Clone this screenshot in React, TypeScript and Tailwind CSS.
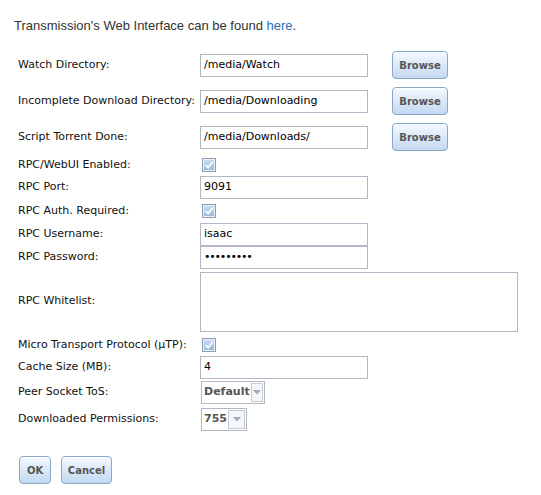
import React from "react";

const label = "text-[11px] text-[#111] w-[182px] shrink-0";
const field =
  "h-[23px] w-[168px] border border-[#b3b9c4] bg-white px-[3px] text-[11px] text-black flex items-center";
const btn =
  "h-[28px] rounded-[4px] border border-[#8aa7c9] bg-[linear-gradient(to_bottom,#f3f8fe,#c4d9f1)] text-[10px] font-bold text-[#555] shadow-[inset_0_1px_0_#fff]";

function Browse() {
  return <button className={`ml-[24px] w-[56px] ${btn}`}>Browse</button>;
}

function Check() {
  return (
    <span className="ml-[2px] inline-flex h-[14px] w-[14px] items-center justify-center border border-[#8e9db2] bg-[#a9c3e4] bg-[linear-gradient(to_bottom,#cfdff3,#94b4dd)] shadow-[inset_0_0_0_1px_#e8f0fa]">
      <svg width="10" height="10" viewBox="0 0 10 10">
        <path d="M1.5 5.2 L4 7.6 L8.8 2" fill="none" stroke="#fff" strokeWidth="1.8" />
      </svg>
    </span>
  );
}

function Select({ text, w }: { text: string; w: string }) {
  return (
    <div className={`ml-[1px] flex h-[23px] items-stretch border border-[#b3b9c4] bg-white ${w}`}>
      <span className="flex flex-1 items-center pl-[2px] text-[11px] font-bold text-[#555]">{text}</span>
      <span className="m-[1px] flex w-[17px] items-center justify-center border border-[#c6ccd4] bg-[#f4f6f8]">
        <svg width="8" height="5" viewBox="0 0 8 5">
          <path d="M0 0 H8 L4 4.5 Z" fill="#9aaac0" />
        </svg>
      </span>
    </div>
  );
}

function Row({ h, name, children }: { h: string; name: string; children: React.ReactNode }) {
  return (
    <div className={`flex items-center ${h}`}>
      <span className={label}>{name}</span>
      {children}
    </div>
  );
}

export default function App() {
  return (
    <div
      className="w-[541px] h-[495px] bg-white"
      style={{ fontFamily: '"DejaVu Sans", Verdana, sans-serif' }}
    >
      <p
        className="pl-[14px] pt-[17px] text-[13px] leading-[18px] text-[#333]"
        style={{ fontFamily: '"Liberation Sans", Arial, sans-serif' }}
      >
        Transmission's Web Interface can be found <span className="text-[#2a6db0]">here</span>.
      </p>
      <div className="mt-[12px] pl-[18px]">
        <Row h="h-[36px]" name="Watch Directory:">
          <div className={field}>/media/Watch</div>
          <Browse />
        </Row>
        <Row h="h-[36px]" name="Incomplete Download Directory:">
          <div className={field}>/media/Downloading</div>
          <Browse />
        </Row>
        <Row h="h-[36px]" name="Script Torrent Done:">
          <div className={field}>/media/Downloads/</div>
          <Browse />
        </Row>
        <Row h="h-[20px]" name="RPC/WebUI Enabled:">
          <Check />
        </Row>
        <Row h="h-[24px]" name="RPC Port:">
          <div className={field + " h-[22px]"}>9091</div>
        </Row>
        <Row h="h-[24px]" name="RPC Auth. Required:">
          <Check />
        </Row>
        <Row h="h-[23px]" name="RPC Username:">
          <div className={field + " h-[22px]"}>isaac</div>
        </Row>
        <Row h="h-[23px]" name="RPC Password:">
          <div className={field + " h-[22px] tracking-[-1.2px]"}>•••••••••</div>
        </Row>
        <Row h="h-[65px]" name="RPC Whitelist:">
          <div className="h-[60px] w-[318px] border border-[#b3b9c4] bg-white" />
        </Row>
        <Row h="h-[22px]" name="Micro Transport Protocol (µTP):">
          <Check />
        </Row>
        <Row h="h-[23px]" name="Cache Size (MB):">
          <div className={field + " h-[22px]"}>4</div>
        </Row>
        <Row h="h-[27px]" name="Peer Socket ToS:">
          <Select text="Default" w="w-[64px]" />
        </Row>
        <Row h="h-[27px]" name="Downloaded Permissions:">
          <Select text="755" w="w-[46px]" />
        </Row>
        <div className="mt-[23px] flex gap-[10px] pl-[1px]">
          <button className={`w-[32px] ${btn}`}>OK</button>
          <button className={`w-[51px] ${btn}`}>Cancel</button>
        </div>
      </div>
    </div>
  );
}
